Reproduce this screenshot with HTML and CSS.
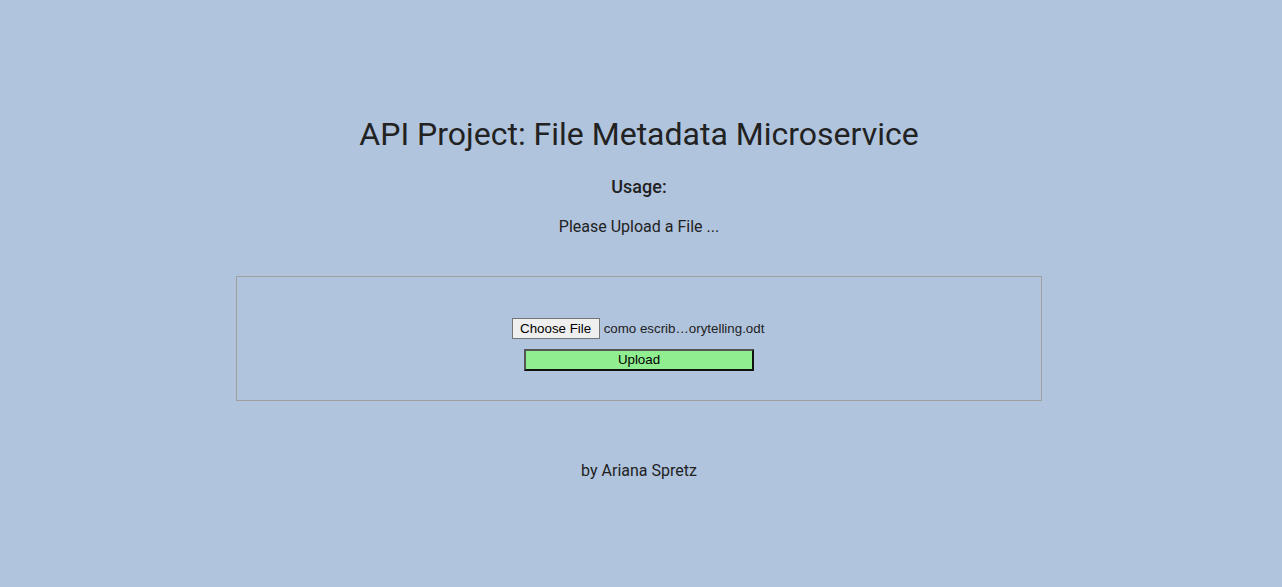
FILE: index.html
```html
<!DOCTYPE html>
<html>
<head>
<meta charset="utf-8">
<title>File Metadata Microservice</title>
<link rel="stylesheet" href="styles.css">
</head>
<body>
<div class="container">
  <h1 class="title">API Project: File Metadata Microservice</h1>
  <h3 class="usage">Usage:</h3>
  <p class="hint">Please Upload a File ...</p>
  <div class="view">
    <form class="upload-form" onsubmit="return false">
      <div class="file-row">
        <button type="button" class="choose">Choose File</button>
        <span class="file-name">como escrib…orytelling.odt</span>
      </div>
      <button type="button" class="upload">Upload</button>
    </form>
  </div>
  <p class="footer">by Ariana Spretz</p>
</div>
</body>
</html>
```
FILE: styles.css
```css
html, body {
  margin: 0;
  padding: 0;
}
body {
  background: #b0c4de;
  color: #222;
  font-family: Roboto, "Noto Sans", sans-serif;
  height: 587px;
}
.container {
  display: flex;
  flex-direction: column;
  align-items: center;
  padding-top: 114px;
  padding-right: 4px;
}
.title {
  margin: 0;
  font-size: 32px;
  font-weight: 400;
  line-height: 40px;
}
.usage {
  margin: 21px 0 0;
  font-size: 18px;
  font-weight: 500;
  line-height: 24px;
}
.hint {
  margin: 16px 0 0;
  font-size: 16px;
  line-height: 24px;
}
.view {
  margin-top: 37px;
  width: 804px;
  height: 123px;
  border: 1px solid #a0a0a0;
  display: flex;
  align-items: center;
  justify-content: center;
}
.upload-form {
  display: flex;
  flex-direction: column;
  align-items: center;
  gap: 10px;
  padding-top: 11px;
}
.file-row {
  display: flex;
  align-items: center;
  gap: 4px;
  padding-right: 2px;
  font-family: "Liberation Sans", Arial, sans-serif;
  font-size: 13.33px;
}
.choose {
  font-family: "Liberation Sans", Arial, sans-serif;
  font-size: 13.33px;
  color: #000;
  background: #efefef;
  border: 1px solid #767676;
  border-radius: 0;
  padding: 1px 6px;
  height: 21px;
  width: 88px;
}
.file-name {
  color: #222;
}
.upload {
  width: 230px;
  height: 22px;
  background: #90ee90;
  border: 2px solid #111;
  border-top-color: #555;
  border-left-color: #555;
  font-family: "Liberation Sans", Arial, sans-serif;
  font-size: 13.33px;
  color: #000;
  padding: 0;
}
.footer {
  margin: 58px 0 0;
  font-size: 16px;
  line-height: 24px;
}
```
